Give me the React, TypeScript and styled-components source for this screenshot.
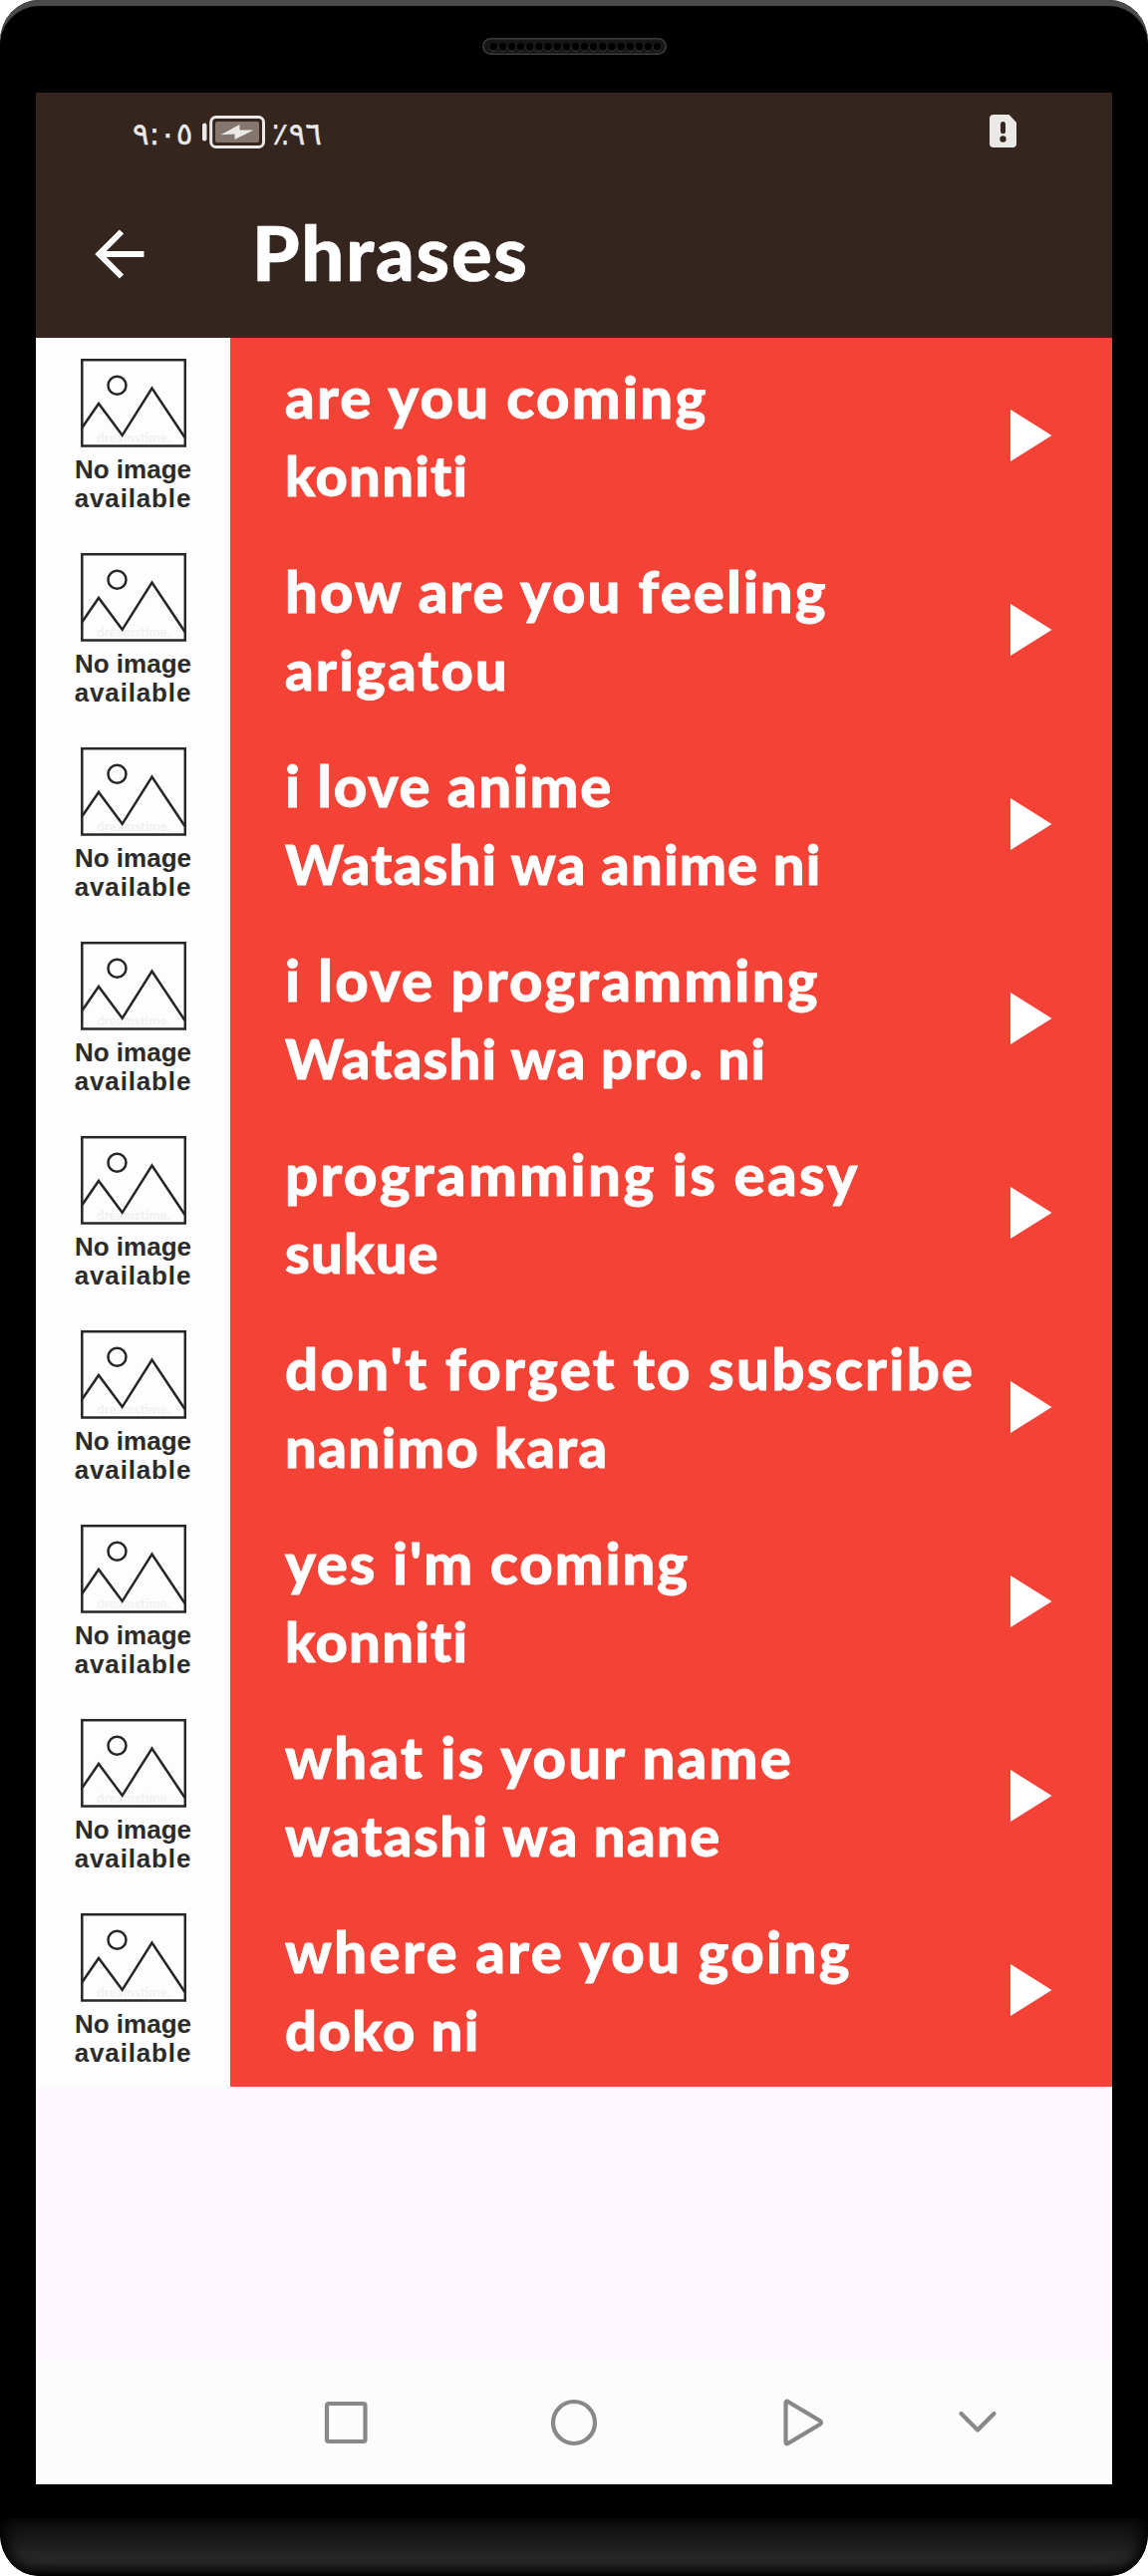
import React from 'react';
import styled, { createGlobalStyle } from 'styled-components';

const Global = createGlobalStyle`
  body { margin: 0; background: #fff; }
  * { box-sizing: border-box; }
`;

const Phone = styled.div`
  width: 1152px;
  height: 2585px;
  border-radius: 39px / 42px;
  overflow: hidden;
  background: #000;
  display: flex;
  flex-direction: column;
  align-items: center;
  box-shadow: inset 0 7px 1px -1px #4b4b4b;
`;

const TopBezel = styled.div`
  height: 93px;
  padding-top: 38px;
  flex: none;
`;

const SpeakerGrille = styled.svg`
  display: block;
`;

const Screen = styled.main`
  width: 1080px;
  height: 2400px;
  flex: none;
  display: flex;
  flex-direction: column;
  background: #fef7ff;
`;

const Chin = styled.div`
  width: 100%;
  height: 58px;
  margin-top: 34px;
  flex: none;
  border-radius: 0 0 39px 39px / 0 0 42px 42px;
  background: linear-gradient(#0b0b0b, #1a1a1a 40%, #262626 64%, #242424 76%, #151515 90%, #000);
  box-shadow: inset 12px 0 14px -6px #000, inset -12px 0 14px -6px #000;
`;

const StatusBar = styled.div`
  height: 78px;
  flex: none;
  padding: 0 96px 0 97px;
  display: flex;
  justify-content: space-between;
  align-items: center;
  background: #34251f;
`;

const StatusGroup = styled.div`
  display: flex;
  align-items: center;
  direction: ltr;
`;

const StatusText = styled.span<{ $width: number; $spacing: number; $gap?: number }>`
  width: ${(p) => p.$width}px;
  margin-left: ${(p) => p.$gap ?? 0}px;
  padding-top: 4px;
  font: 400 31px/40px "DejaVu Sans", sans-serif;
  letter-spacing: ${(p) => p.$spacing}px;
  color: #ebe9e8;
  -webkit-text-stroke: 0.4px #ebe9e8;
  white-space: nowrap;
  direction: ltr;
  unicode-bidi: bidi-override;
`;

const AlertSlot = styled.div`
  display: flex;
  margin-bottom: 2px;
`;

const AppBar = styled.header`
  height: 168px;
  flex: none;
  display: flex;
  align-items: center;
  padding-left: 58px;
  background: #34251f;
`;

const Title = styled.h1`
  margin: 0 0 4px 107px;
  font: 900 76px/96px Lato, sans-serif;
  letter-spacing: 1.7px;
  color: #fff;
  -webkit-text-stroke: 0.6px #fff;
`;

const List = styled.ul`
  margin: 0;
  padding: 0;
  list-style: none;
`;

const Row = styled.li`
  height: 195px;
  display: flex;
  background: #f44336;
`;

const Thumb = styled.div`
  width: 195px;
  flex: none;
  padding-top: 20px;
  display: flex;
  flex-direction: column;
  align-items: center;
  background: #fdfdfd;
`;

const Caption = styled.div`
  margin-top: 7px;
  font: 700 26px/28.5px "Liberation Sans", Arial, sans-serif;
  color: #2b2b2b;
  text-align: center;
`;

const CaptionWide = styled.div`
  letter-spacing: 0.85px;
`;

const Words = styled.div`
  flex: 1;
  padding: 20px 0 0 55px;
  white-space: nowrap;
  color: #fff;
  -webkit-text-stroke: 0.8px #fff;
`;

const Line = styled.div<{ $size: number; $spacing: number }>`
  height: 79px;
  font: 900 ${(p) => p.$size}px/78px Lato, sans-serif;
  letter-spacing: ${(p) => p.$spacing}px;
`;

const PlayButton = styled.button`
  width: 102px;
  padding: 0;
  border: 0;
  background: none;
  display: flex;
  align-items: center;
  flex: none;
`;

const NavBar = styled.nav`
  height: 124px;
  margin-top: auto;
  flex: none;
  background: #fcfcfc;
`;

const phrases: [string, number, string, number][] = [
  ['are you coming', 2.25, 'konniti', 1.3],
  ['how are you feeling', 2.05, 'arigatou', 2.2],
  ['i love anime', 1.7, 'Watashi wa anime ni', 1.2],
  ['i love programming', 2.2, 'Watashi wa pro. ni', 1.2],
  ['programming is easy', 2.4, 'sukue', 1.2],
  ["don't forget to subscribe", 2.33, 'nanimo kara', 1.5],
  ["yes i'm coming", 1.9, 'konniti', 1.3],
  ['what is your name', 2.3, 'watashi wa nane', 1.5],
  ['where are you going', 2.38, 'doko ni', 1.5],
];

const Speaker = () => (
  <SpeakerGrille width="185" height="17" viewBox="0 0 186 17">
    <rect x="0.75" y="0.75" width="184.5" height="15.5" rx="7.75" fill="#161616" stroke="#3c3c3c" strokeWidth="1.5" />
    {Array.from({ length: 19 }, (_, i) => (
      <g key={i}>
        <circle cx={11.3 + i * 9.18} cy="9.6" r="4" fill="#555" />
        <circle cx={11.3 + i * 9.18} cy="8.9" r="3.9" fill="#000" />
      </g>
    ))}
  </SpeakerGrille>
);

const Battery = () => (
  <svg width="63" height="33" viewBox="0 0 63 33">
    <rect x="0" y="7.5" width="4.5" height="18" rx="2.2" fill="#ebe9e8" />
    <rect x="8.7" y="1.5" width="52.8" height="30" rx="5" fill="none" stroke="#ebe9e8" strokeWidth="3" />
    <rect x="13" y="6" width="44" height="21" rx="2" fill="#82766f" />
    <path d="M18.5 19.3 37.5 9 37.5 14.6 51.5 14.6 32.5 24 32.5 18.5Z" fill="#ebe9e8" />
  </svg>
);

const SimAlert = () => (
  <svg width="27" height="33" viewBox="0 0 27 33">
    <path d="M4 0H19.5L27 8V29a4 4 0 0 1-4 4H4a4 4 0 0 1-4-4V4A4 4 0 0 1 4 0Z" fill="#ebe9e8" />
    <rect x="11" y="7" width="5" height="12.3" rx="2.5" fill="#34251f" />
    <circle cx="13.5" cy="24.5" r="3.2" fill="#34251f" />
  </svg>
);

const BackArrow = () => (
  <svg width="52" height="50" viewBox="0 0 52 50" fill="none" stroke="#fff" strokeWidth="6">
    <path d="M50.5 25H6M28 2.500 5.500 25 28 47.500" />
  </svg>
);

const Placeholder = () => (
  <svg width="106" height="91" viewBox="0 0 106 91" fill="none" stroke="#262626" strokeWidth="2.5">
    <text x="16" y="84.5" textLength="74" fill="#f1f1f1" stroke="none" fontFamily="Lato" fontWeight="700" fontSize="13">dreamstime.</text>
    <rect x="1.3" y="2.2" width="103.500" height="86.300" />
    <circle cx="36.500" cy="27.700" r="9" />
    <path d="M1.500 70 18 46 41.700 77.800 71.500 30.500 104.500 80" />
  </svg>
);

const Play = () => (
  <svg width="42" height="52" viewBox="0 0 42 52">
    <path d="M0 0 41.500 26 0 52Z" fill="#fff" />
  </svg>
);

const NavIcons = () => (
  <svg width="1080" height="124" viewBox="0 0 1080 124" fill="none" stroke="#888" strokeWidth="4.2" strokeLinejoin="round" strokeLinecap="round">
    <rect x="292" y="43" width="38.500" height="38" rx="2" />
    <circle cx="540" cy="62" r="21" />
    <path d="M752.500 42.500V81.500Q752.500 84.500 755.500 82.500L786.500 64Q789.500 62 786.500 60L755.500 41.500Q752.500 39.500 752.500 42.500Z" />
    <path d="M928.500 53 945 69.500 961.500 53" />
  </svg>
);

export default function App() {
  return (
    <>
      <Global />
      <Phone>
        <TopBezel><Speaker /></TopBezel>
        <Screen>
          <StatusBar>
            <StatusGroup>
              <StatusText $width={70} $spacing={-1.8}>٩:٠٥</StatusText>
              <Battery />
              <StatusText $width={60} $spacing={1} $gap={7}>٪٩٦</StatusText>
            </StatusGroup>
            <AlertSlot><SimAlert /></AlertSlot>
          </StatusBar>
          <AppBar>
            <BackArrow />
            <Title>Phrases</Title>
          </AppBar>
          <List>
            {phrases.map(([en, enSpacing, ja, jaSpacing]) => (
              <Row key={en}>
                <Thumb>
                  <Placeholder />
                  <Caption>
                    No image
                    <CaptionWide>available</CaptionWide>
                  </Caption>
                </Thumb>
                <Words>
                  <Line $size={58} $spacing={enSpacing}>{en}</Line>
                  <Line $size={56} $spacing={jaSpacing}>{ja}</Line>
                </Words>
                <PlayButton aria-label="Play"><Play /></PlayButton>
              </Row>
            ))}
          </List>
          <NavBar><NavIcons /></NavBar>
        </Screen>
        <Chin />
      </Phone>
    </>
  );
}
